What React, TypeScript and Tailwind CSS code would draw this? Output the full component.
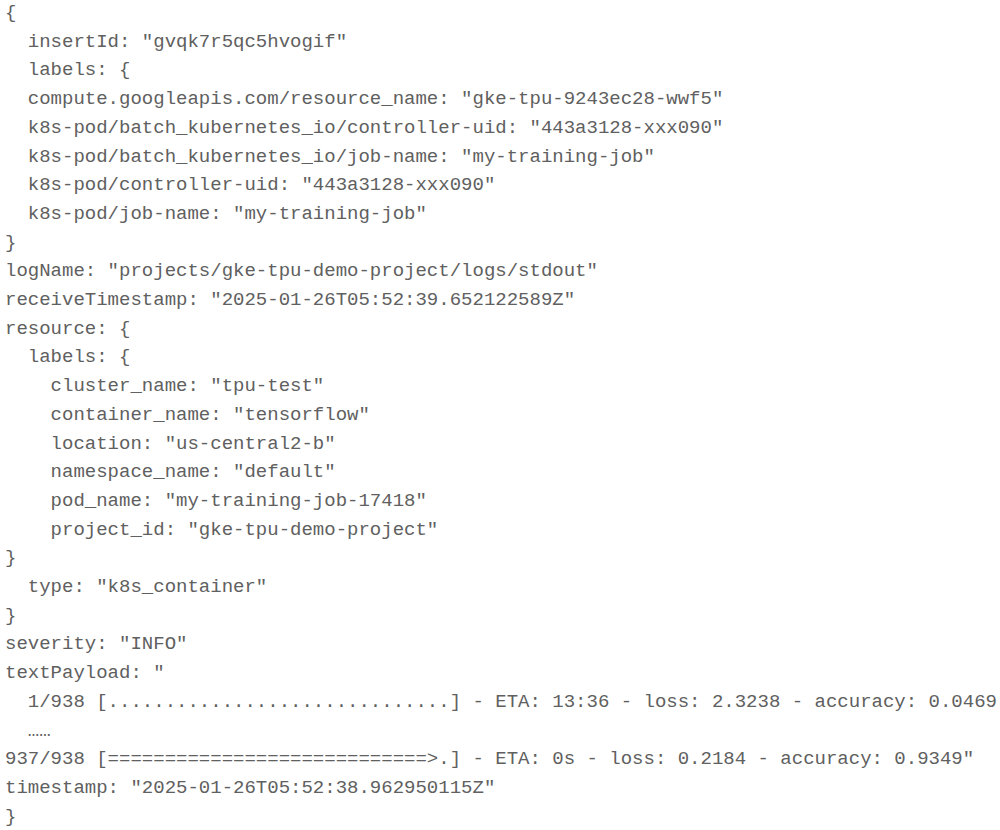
const LINES = [
  "{",
  "  insertId: \"gvqk7r5qc5hvogif\"",
  "  labels: {",
  "  compute.googleapis.com/resource_name: \"gke-tpu-9243ec28-wwf5\"",
  "  k8s-pod/batch_kubernetes_io/controller-uid: \"443a3128-xxx090\"",
  "  k8s-pod/batch_kubernetes_io/job-name: \"my-training-job\"",
  "  k8s-pod/controller-uid: \"443a3128-xxx090\"",
  "  k8s-pod/job-name: \"my-training-job\"",
  "}",
  "logName: \"projects/gke-tpu-demo-project/logs/stdout\"",
  "receiveTimestamp: \"2025-01-26T05:52:39.652122589Z\"",
  "resource: {",
  "  labels: {",
  "    cluster_name: \"tpu-test\"",
  "    container_name: \"tensorflow\"",
  "    location: \"us-central2-b\"",
  "    namespace_name: \"default\"",
  "    pod_name: \"my-training-job-17418\"",
  "    project_id: \"gke-tpu-demo-project\"",
  "}",
  "  type: \"k8s_container\"",
  "}",
  "severity: \"INFO\"",
  "textPayload: \"",
  "  1/938 [..............................] - ETA: 13:36 - loss: 2.3238 - accuracy: 0.0469",
  "  ……",
  "937/938 [============================>.] - ETA: 0s - loss: 0.2184 - accuracy: 0.9349\"",
  "timestamp: \"2025-01-26T05:52:38.962950115Z\"",
  "}",
];

export default function App() {
  return (
    <div className="w-[1000px] h-[830px] bg-white overflow-hidden">
      <pre
        className="pl-[5px] -mt-[1px] text-[19px] leading-[28.7px] text-[#606060] whitespace-pre"
        style={{ fontFamily: '"Liberation Mono", "Courier New", monospace' }}>
        {LINES.map((line, i) => (
          <div key={i}>{line}</div>
        ))}
      </pre>
    </div>
  );
}
